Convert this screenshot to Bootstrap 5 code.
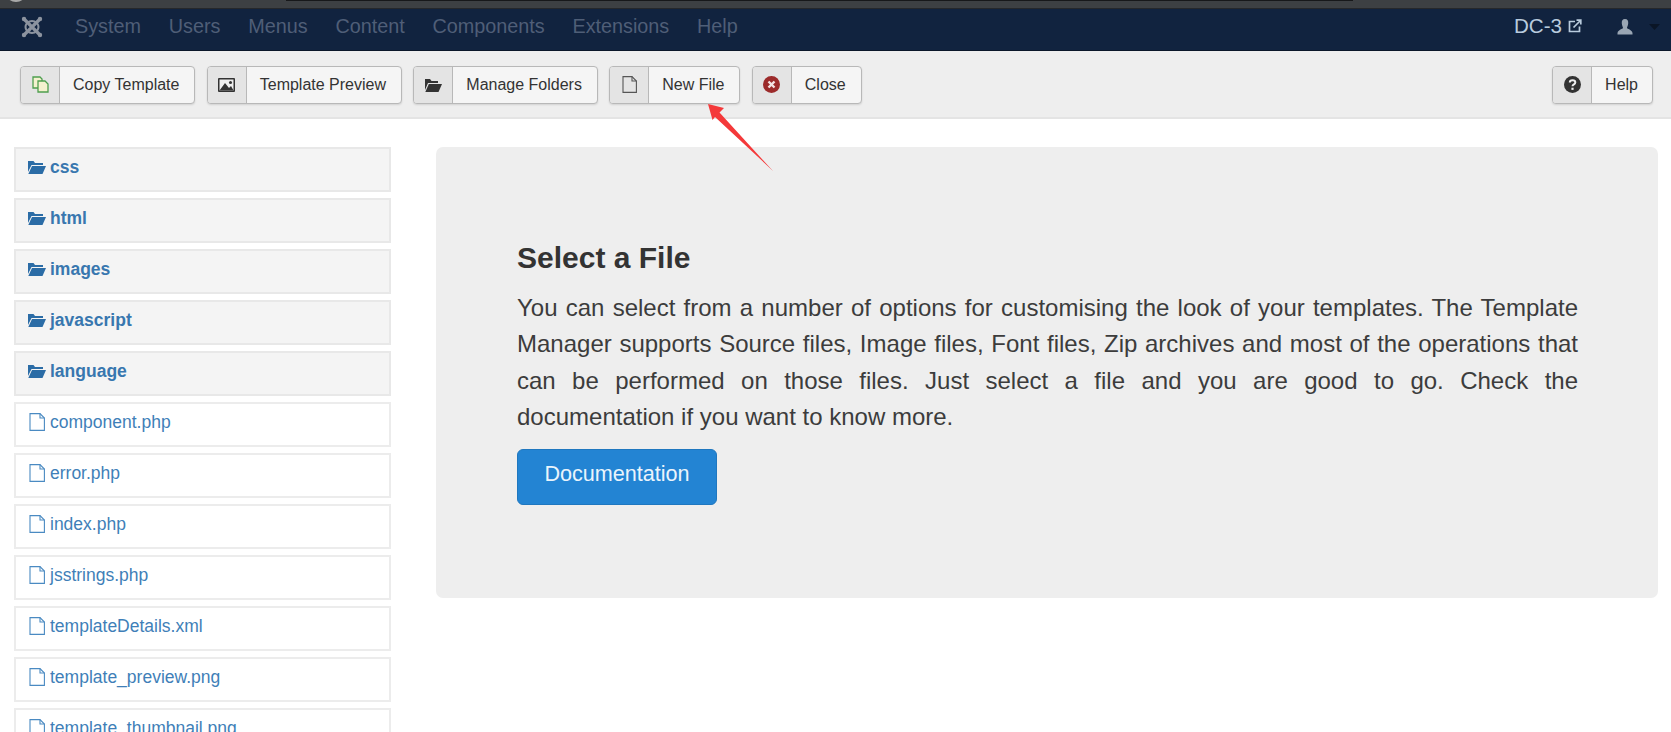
<!DOCTYPE html>
<html lang="en">
<head>
  <meta charset="UTF-8">
  <meta name="viewport" content="width=device-width, initial-scale=1.0">
  <title>Template Manager</title>
  <link href="https://cdn.jsdelivr.net/npm/bootstrap@5.3.0/dist/css/bootstrap.min.css" rel="stylesheet">
  <style>
    html, body {
      height: 100%;
      overflow: hidden;
    }
    body {
      position: relative;
      font-family: "Liberation Sans", Arial, sans-serif;
      color: #333;
      background: #fff;
    }
    .top-strip {
      height: 9px;
      background: #3d4043;
      border-bottom: 1px solid #26282b;
      overflow: hidden;
    }
    .strip-dot {
      width: 22px;
      height: 22px;
      margin: -20px 0 0 5px;
      border-radius: 50%;
      background: #a9a9a9;
    }
    .strip-bar {
      width: 1067px;
      height: 1px;
      margin-left: 259px;
      background: #17181a;
    }
    .admin-bar {
      height: 42px;
      padding: 0 11px 6px 20px;
      background: #11233f;
      border-bottom: 1px solid #0b1729;
    }
    .admin-menu {
      gap: 27.8px;
      margin-left: 31px;
      font-size: 19.8px;
    }
    .admin-menu a {
      color: #4f5e77;
      text-decoration: none;
    }
    .site-link {
      gap: 6px;
      color: #b9cbdd;
      font-size: 20.6px;
      text-decoration: none;
    }
    .user-ico {
      margin-left: 35px;
    }
    .tool-bar {
      height: 68px;
      padding: 1px 18px 0 20px;
      background: #eee;
      border-bottom: 2px solid #e4e4e4;
      gap: 11.3px;
    }
    .tool-btn {
      height: 38px;
      padding: 0;
      font-size: 16px;
      color: #333;
      background: #f5f5f5;
      border: 1px solid #b8b8b8;
      border-radius: 4px;
      box-shadow: 0 1px 2px rgba(0, 0, 0, .12);
      overflow: hidden;
    }
    .tool-ico {
      width: 39px;
      height: 100%;
      background: #e4e4e4;
      border-right: 1px solid #b8b8b8;
    }
    .tool-txt {
      padding: 0 15px 0 13px;
    }
    .tool-help .tool-txt {
      padding-right: 14px;
    }
    .page-body {
      padding: 28px 13px 0 14px;
      gap: 45px;
    }
    .file-tree {
      width: 377px;
      flex: none;
      gap: 6px;
    }
    .tree-row {
      height: 45px;
      padding: 0 0 4px 12px;
      gap: 4px;
      flex: none;
      font-size: 17.5px;
      color: #3f7fb8;
      text-decoration: none;
      background: #fff;
      border: 2px solid #ececec;
    }
    .tree-dir {
      font-weight: 700;
      color: #3877af;
      background: #f4f4f4;
      border-color: #e8e8e8;
    }
    .tree-row svg {
      flex: none;
      margin-bottom: 2px;
    }
    .intro-panel {
      flex: 1;
      align-self: flex-start;
      padding: 93px 80px 93px 81px;
      background: #eee;
      border-radius: 7px;
    }
    .intro-panel h2 {
      margin: 0 0 14px;
      font-size: 30px;
      line-height: 36px;
      font-weight: 700;
      color: #333;
    }
    .intro-panel p {
      margin: 0 0 13px;
      font-size: 24px;
      line-height: 36.4px;
      text-align: justify;
      color: #3c3c3c;
    }
    .doc-btn {
      width: 200px;
      height: 56px;
      padding: 0 0 5px;
      font-size: 21.6px;
      color: #eaf4fc;
      background: #2384d3;
      border: 1px solid #1f77bf;
      border-radius: 6px;
    }
    .note-arrow {
      position: absolute;
      left: 700px;
      top: 98px;
    }
  </style>
</head>
<body>
  <div class="top-strip d-flex">
    <div class="strip-dot"></div>
    <div class="strip-bar"></div>
  </div>

  <nav class="admin-bar d-flex align-items-center">
    <svg width="24" height="24" viewBox="0 0 24 24" fill="none" stroke="#8c939f" stroke-width="3.200" stroke-linecap="round">
      <path d="M4 4 L20 20 M20 4 L4 20"/>
      <path d="M7 8 Q12 4 17 8 Q20 12 17 16 Q12 20 7 16 Q4 12 7 8 Z" stroke-width="2"/>
      <circle cx="4" cy="4" r="2.200" fill="#8c939f" stroke="none"/>
      <circle cx="20" cy="4" r="2.200" fill="#8c939f" stroke="none"/>
      <circle cx="4" cy="20" r="2.200" fill="#8c939f" stroke="none"/>
      <circle cx="20" cy="20" r="2.200" fill="#8c939f" stroke="none"/>
    </svg>
    <div class="admin-menu d-flex">
      <a href="#">System</a>
      <a href="#">Users</a>
      <a href="#">Menus</a>
      <a href="#">Content</a>
      <a href="#">Components</a>
      <a href="#">Extensions</a>
      <a href="#">Help</a>
    </div>
    <a class="site-link d-flex align-items-center ms-auto" href="#">DC-3
      <svg width="14" height="14" viewBox="0 0 14 14" fill="none" stroke="#b9cbdd" stroke-width="1.700">
        <path d="M7 2.500 H1.500 V12.500 H11.500 V7.500"/>
        <path d="M5.500 8.500 L12 2 M8.500 1.200 H12.800 V5.500"/>
      </svg>
    </a>
    <svg class="user-ico" width="16" height="16" viewBox="0 0 16 16" fill="#9aa6b4">
      <path d="M8 0 C5.500 0 4.500 2 4.800 4.500 C5 6.500 6 8 6 9 C6 10 1 10.500 .5 14 V15.500 H15.500 V14 C15 10.500 10 10 10 9 C10 8 11 6.500 11.200 4.500 C11.500 2 10.500 0 8 0 Z"/>
    </svg>
    <svg class="ms-3" width="11" height="6" viewBox="0 0 11 6" fill="#0a1526">
      <path d="M0 0 H11 L5.500 6 Z"/>
    </svg>
  </nav>

  <div class="tool-bar d-flex align-items-center">
    <button class="tool-btn btn d-flex align-items-center" type="button">
      <span class="tool-ico d-flex align-items-center justify-content-center">
        <svg width="17" height="17" viewBox="0 0 17 17" fill="#f4f1cf" stroke="#4e9e4e" stroke-width="1.300">
          <path d="M1 1 H8 L10 3 V12 H1 Z"/>
          <path d="M6 5 H13 L16 8 V16 H6 Z"/>
        </svg>
      </span>
      <span class="tool-txt">Copy Template</span>
    </button>
    <button class="tool-btn btn d-flex align-items-center" type="button">
      <span class="tool-ico d-flex align-items-center justify-content-center">
        <svg width="17" height="14" viewBox="0 0 17 14">
          <rect width="17" height="14" rx="1" fill="#333"/>
          <rect x="1.500" y="1.500" width="14" height="11" fill="#eee"/>
          <path d="M1.500 12.500 L7 5 L11 10 L13 8 L15.500 12.500 Z" fill="#333"/>
          <circle cx="12.500" cy="4.500" r="1.500" fill="#333"/>
        </svg>
      </span>
      <span class="tool-txt">Template Preview</span>
    </button>
    <button class="tool-btn btn d-flex align-items-center" type="button">
      <span class="tool-ico d-flex align-items-center justify-content-center">
        <svg width="17" height="14" viewBox="0 0 17 14" fill="#333">
          <path d="M0 1 H5 L6.500 3 H13 V5 H3 L0 12 Z"/>
          <path d="M3.800 6 H17 L13.500 14 H0.300 Z"/>
        </svg>
      </span>
      <span class="tool-txt">Manage Folders</span>
    </button>
    <button class="tool-btn btn d-flex align-items-center" type="button">
      <span class="tool-ico d-flex align-items-center justify-content-center">
        <svg width="15" height="17" viewBox="0 0 15 17" fill="none" stroke="#555" stroke-width="1.100">
          <path d="M1 .6 H10 L14.400 5 V16.400 H1 Z"/>
          <path d="M10 .6 V5 H14.400"/>
        </svg>
      </span>
      <span class="tool-txt">New File</span>
    </button>
    <button class="tool-btn btn d-flex align-items-center" type="button">
      <span class="tool-ico d-flex align-items-center justify-content-center">
        <svg width="17" height="17" viewBox="0 0 17 17">
          <circle cx="8.500" cy="8.500" r="8.500" fill="#9c2b2b"/>
          <path d="M5.500 5.500 L11.500 11.500 M11.500 5.500 L5.500 11.500" stroke="#f3e3e3" stroke-width="2.400"/>
        </svg>
      </span>
      <span class="tool-txt">Close</span>
    </button>
    <button class="tool-btn tool-help btn d-flex align-items-center ms-auto" type="button">
      <span class="tool-ico d-flex align-items-center justify-content-center">
        <svg width="17" height="17" viewBox="0 0 17 17">
          <circle cx="8.500" cy="8.500" r="8.500" fill="#333"/>
          <path d="M5.800 6.500 C5.800 3.500 11.300 3.500 11.300 6.500 C11.300 8.500 8.500 8.200 8.500 10.300" fill="none" stroke="#eee" stroke-width="2"/>
          <rect x="7.400" y="11.700" width="2.200" height="2.200" fill="#eee"/>
        </svg>
      </span>
      <span class="tool-txt">Help</span>
    </button>
  </div>

  <div class="page-body d-flex">
    <div class="file-tree d-flex flex-column">
      <a class="tree-row tree-dir d-flex align-items-center" href="#"><svg width="18" height="14" viewBox="0 0 18 14" fill="#2b6ca6"><path d="M0 1 H5.500 L7 3 H15 V5 H3.500 L0 12 Z"/><path d="M4 6 H18 L14.500 14 H0.300 Z"/></svg>css</a>
      <a class="tree-row tree-dir d-flex align-items-center" href="#"><svg width="18" height="14" viewBox="0 0 18 14" fill="#2b6ca6"><path d="M0 1 H5.500 L7 3 H15 V5 H3.500 L0 12 Z"/><path d="M4 6 H18 L14.500 14 H0.300 Z"/></svg>html</a>
      <a class="tree-row tree-dir d-flex align-items-center" href="#"><svg width="18" height="14" viewBox="0 0 18 14" fill="#2b6ca6"><path d="M0 1 H5.500 L7 3 H15 V5 H3.500 L0 12 Z"/><path d="M4 6 H18 L14.500 14 H0.300 Z"/></svg>images</a>
      <a class="tree-row tree-dir d-flex align-items-center" href="#"><svg width="18" height="14" viewBox="0 0 18 14" fill="#2b6ca6"><path d="M0 1 H5.500 L7 3 H15 V5 H3.500 L0 12 Z"/><path d="M4 6 H18 L14.500 14 H0.300 Z"/></svg>javascript</a>
      <a class="tree-row tree-dir d-flex align-items-center" href="#"><svg width="18" height="14" viewBox="0 0 18 14" fill="#2b6ca6"><path d="M0 1 H5.500 L7 3 H15 V5 H3.500 L0 12 Z"/><path d="M4 6 H18 L14.500 14 H0.300 Z"/></svg>language</a>
      <a class="tree-row d-flex align-items-center" href="#"><svg width="18" height="18" viewBox="0 0 18 18" fill="none" stroke="#4a8ac2" stroke-width="1.100"><path d="M2 .6 H12 L16.400 5 V17.400 H2 Z"/><path d="M12 .6 V5 H16.400"/></svg>component.php</a>
      <a class="tree-row d-flex align-items-center" href="#"><svg width="18" height="18" viewBox="0 0 18 18" fill="none" stroke="#4a8ac2" stroke-width="1.100"><path d="M2 .6 H12 L16.400 5 V17.400 H2 Z"/><path d="M12 .6 V5 H16.400"/></svg>error.php</a>
      <a class="tree-row d-flex align-items-center" href="#"><svg width="18" height="18" viewBox="0 0 18 18" fill="none" stroke="#4a8ac2" stroke-width="1.100"><path d="M2 .6 H12 L16.400 5 V17.400 H2 Z"/><path d="M12 .6 V5 H16.400"/></svg>index.php</a>
      <a class="tree-row d-flex align-items-center" href="#"><svg width="18" height="18" viewBox="0 0 18 18" fill="none" stroke="#4a8ac2" stroke-width="1.100"><path d="M2 .6 H12 L16.400 5 V17.400 H2 Z"/><path d="M12 .6 V5 H16.400"/></svg>jsstrings.php</a>
      <a class="tree-row d-flex align-items-center" href="#"><svg width="18" height="18" viewBox="0 0 18 18" fill="none" stroke="#4a8ac2" stroke-width="1.100"><path d="M2 .6 H12 L16.400 5 V17.400 H2 Z"/><path d="M12 .6 V5 H16.400"/></svg>templateDetails.xml</a>
      <a class="tree-row d-flex align-items-center" href="#"><svg width="18" height="18" viewBox="0 0 18 18" fill="none" stroke="#4a8ac2" stroke-width="1.100"><path d="M2 .6 H12 L16.400 5 V17.400 H2 Z"/><path d="M12 .6 V5 H16.400"/></svg>template_preview.png</a>
      <a class="tree-row d-flex align-items-center" href="#"><svg width="18" height="18" viewBox="0 0 18 18" fill="none" stroke="#4a8ac2" stroke-width="1.100"><path d="M2 .6 H12 L16.400 5 V17.400 H2 Z"/><path d="M12 .6 V5 H16.400"/></svg>template_thumbnail.png</a>
    </div>

    <div class="intro-panel">
      <h2>Select a File</h2>
      <p>You can select from a number of options for customising the look of your templates. The Template Manager supports Source files, Image files, Font files, Zip archives and most of the operations that can be performed on those files. Just select a file and you are good to go. Check the documentation&nbsp;if you want to know more.</p>
      <button class="doc-btn btn" type="button">Documentation</button>
    </div>
  </div>

  <!-- red annotation arrow over the toolbar -->
  <svg class="note-arrow" width="80" height="80" viewBox="0 0 80 80">
    <path d="M8 6 L24 10 L19.500 14.500 L73 73 L15 19 L12.500 22 Z" fill="#f4393a"/>
  </svg>

  <script src="https://cdn.jsdelivr.net/npm/bootstrap@5.3.0/dist/js/bootstrap.bundle.min.js"></script>
</body>
</html>
